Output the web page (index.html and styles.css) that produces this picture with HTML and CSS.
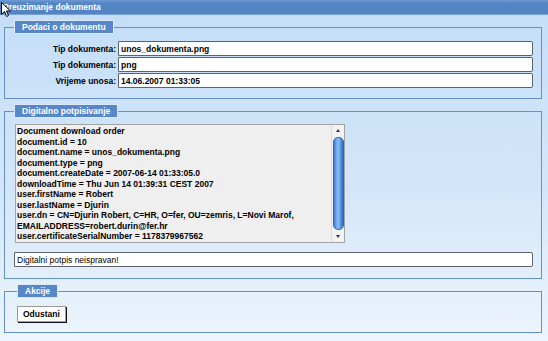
FILE: index.html
```html
<!DOCTYPE html>
<html lang="hr">
  <head>
    <meta charset="UTF-8" />
    <meta name="viewport" content="width=device-width, initial-scale=1.0" />
    <title>Preuzimanje dokumenta</title>
    <link rel="stylesheet" href="styles.css">
  </head>
  <body>
    <div class="titlebar">Preuzimanje dokumenta</div>
    <svg class="cursor" width="10" height="16" viewBox="0 0 10 16">
      <path d="M0.5 0.5 L0.5 12.5 L3.5 9.5 L5.5 14.5 L7.5 13.5 L5.5 9 L9.5 9 Z" fill="#fff" stroke="#000" stroke-width="1" stroke-linejoin="round" />
    </svg>

    <main>
      <fieldset class="box">
        <legend>Podaci o dokumentu</legend>
        <div class="fields">
          <label>Tip dokumenta:</label>
          <input class="field" readonly value="unos_dokumenta.png" />
          <label>Tip dokumenta:</label>
          <input class="field" readonly value="png" />
          <label>Vrijeme unosa:</label>
          <input class="field" readonly value="14.06.2007 01:33:05" />
        </div>
      </fieldset>

      <fieldset class="box sign">
        <legend>Digitalno potpisivanje</legend>
        <div class="log">
          <div class="log-text">Document download order
document.id = 10
document.name = unos_dokumenta.png
document.type = png
document.createDate = 2007-06-14 01:33:05.0
downloadTime = Thu Jun 14 01:39:31 CEST 2007
user.firstName = Robert
user.lastName = Djurin
user.dn = CN=Djurin Robert, C=HR, O=fer, OU=zemris, L=Novi Marof,
EMAILADDRESS=robert.durin@fer.hr
user.certificateSerialNumber = 1178379967562</div>
          <div class="scrollbar">
            <span class="arrow up"></span>
            <span class="thumb"></span>
            <span class="arrow down"></span>
          </div>
        </div>
        <input class="field status" readonly value="Digitalni potpis neispravan!" />
      </fieldset>

      <fieldset class="box actions">
        <legend>Akcije</legend>
        <button class="btn">Odustani</button>
      </fieldset>
    </main>
  </body>
</html>
```

FILE: styles.css
```css
html {
  height: 100%;
}

body {
  margin: 0;
  min-height: 100%;
  position: relative;
  font-family: 'Liberation Sans', Arial, sans-serif;
  font-size: 8.5px;
  font-weight: bold;
  color: #000;
  background: linear-gradient(#c3def8 0%, #d3e6f9 55%, #edf4fc 100%);
}

.titlebar {
  height: 15px;
  line-height: 14px;
  padding-left: 3px;
  color: #fff;
  background: linear-gradient(#6f9bd3 0px, #5686c5 3px, #5383c3 14px, #9fc3ec 15px);
}

.cursor {
  position: absolute;
  top: 2px;
  left: 1px;
}

main {
  display: flex;
  flex-direction: column;
}

.box {
  margin: 5px 6px 0 4px;
  padding: 7px 8px 10px 9px;
  min-width: 0;
  border: 1px solid #6690c8;
}

.box legend {
  height: 14px;
  box-sizing: border-box;
  padding: 0 7px;
  line-height: 12px;
  color: #fff;
  background-color: #5887c7;
  border: 1px solid #dbe8f7;
}

.fields {
  display: grid;
  grid-template-columns: 102px 1fr;
  column-gap: 2px;
  row-gap: 1px;
}

.fields label {
  text-align: right;
  align-self: center;
}

.field {
  height: 15px;
  box-sizing: border-box;
  margin: 0;
  padding: 0 2px;
  font: inherit;
  color: #000;
  background-color: #fff;
  border: 1px solid #5c636b;
  border-radius: 0 2px 2px 0;
  outline: none;
}

.sign {
  padding: 6px 8px 11px 9px;
}

.log {
  display: flex;
  width: 330px;
  height: 119px;
  box-sizing: border-box;
  margin-left: 1px;
  background-color: #efefef;
  border: 1px solid #a3a3a3;
  overflow: hidden;
}

.log-text {
  flex: 1;
  padding: 1px 1px 0;
  line-height: 10.5px;
  white-space: pre;
}

.scrollbar {
  width: 12px;
  display: flex;
  flex-direction: column;
  align-items: center;
  background-color: #f2f2f2;
  border-left: 1px solid #dcdcdc;
}

.arrow {
  width: 0;
  height: 0;
  margin: 4px 0;
  border-left: 2.5px solid transparent;
  border-right: 2.5px solid transparent;
}

.arrow.up {
  border-bottom: 3px solid #333;
}

.arrow.down {
  border-top: 3px solid #333;
}

.thumb {
  flex: 1;
  width: 9px;
  margin: 1px 0;
  border: 1px solid #2f64b4;
  border-radius: 5px;
  background: linear-gradient(90deg, #3e7fd9, #8fc0f5 45%, #5c9be8 70%, #2d6cc8);
}

.status {
  width: 100%;
  margin-top: 9px;
  font-weight: normal;
}

.actions {
  padding: 8px 8px 10px 12px;
  align-items: flex-start;
}

.btn {
  height: 16px;
  padding: 0 5px;
  font: inherit;
  color: #000;
  background-color: #fff;
  border: 1px solid #9a9a9a;
  box-shadow: 1px 1px 0 #111;
}
```
